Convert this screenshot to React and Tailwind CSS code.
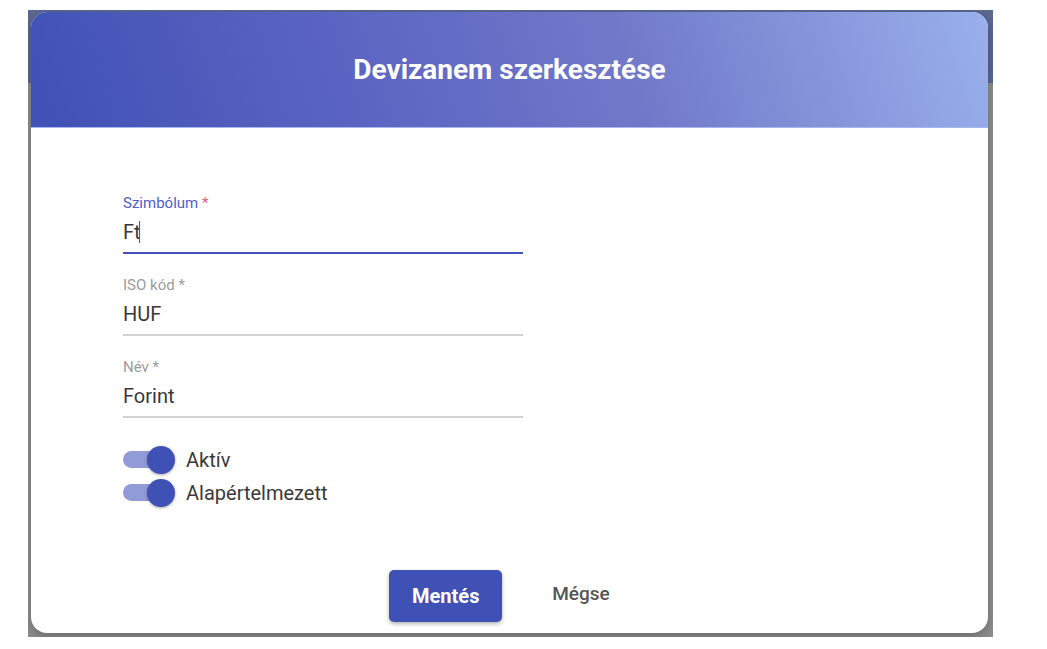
import React from 'react'

const font = { fontFamily: 'Roboto, "Noto Sans", sans-serif' }

function Field({ label, value, focused, caret }) {
  return (
    <div className="w-[400px]">
      <div className={`h-[18px] text-[15px] leading-[18px] ${focused ? 'text-[#4e5ec4]' : 'text-[#9b9b9b]'}`}>
        {label} <span className={focused ? 'text-[#ec5b85]' : ''}>*</span>
      </div>
      <div className="mt-[7px] h-[26px] text-[20px] leading-[26px] text-[#383838] flex items-center">
        {value}
        {caret && <span className="-ml-[2px] w-[1.5px] h-[22px] bg-[#3f51b5]" />}
      </div>
      <div className={`mt-[7px] h-[2px] ${focused ? 'bg-[#4354b8]' : 'bg-[#d2d2d2]'}`} />
    </div>
  )
}

function Toggle({ label }) {
  return (
    <div className="flex items-center h-[30px]">
      <div className="relative w-[52px] h-[30px]">
        <div className="absolute left-0 top-[6px] w-[44px] h-[17px] rounded-full bg-[#909bd8]" />
        <div className="absolute left-[24px] top-[1px] w-[28px] h-[28px] rounded-full bg-[#3f51b5] shadow-[0_1px_3px_rgba(0,0,0,0.35)]" />
      </div>
      <span className="ml-[11px] text-[20px] text-[#3a3a3a]">{label}</span>
    </div>
  )
}

export default function App() {
  return (
    <div className="w-[1047px] h-[649px] bg-white pt-[10px] pl-[28px]" style={font}>
      <div className="relative w-[965px] h-[627px] bg-[#8e8e8e] overflow-hidden">
        <div className="h-[73px] bg-[#5b6891]" />
        <div className="absolute left-[3px] top-[2px] w-[957px] h-[621px] bg-white rounded-[16px] overflow-hidden flex flex-col shadow-[0_4px_12px_rgba(0,0,0,0.25)]">
          <div className="h-[116px] shrink-0 flex items-center justify-center bg-[linear-gradient(72deg,#3f51b5_0%,#5a63c1_32%,#7079c9_62%,#9ab0ec_100%)] border-b border-[#a9b6ee]">
            <h1 className="text-[28px] font-bold text-white">Devizanem szerkesztése</h1>
          </div>
          <div className="flex flex-col pl-[92px] pt-[66px]">
            <Field label="Szimbólum" value="Ft" focused caret />
            <div className="mt-[22px]">
              <Field label="ISO kód" value="HUF" />
            </div>
            <div className="mt-[22px]">
              <Field label="Név" value="Forint" />
            </div>
            <div className="mt-[27px] flex flex-col gap-[3px]">
              <Toggle label="Aktív" />
              <Toggle label="Alapértelmezett" />
            </div>
          </div>
          <div className="mt-[62px] flex justify-center items-center gap-[34px] pr-[4px]">
            <button className="w-[113px] h-[52px] rounded-[5px] bg-[#3f51b5] text-white text-[20px] font-bold shadow-[0_2px_4px_rgba(0,0,0,0.3)]">
              Mentés
            </button>
            <button className="h-[52px] px-[16px] text-[19px] font-medium text-[#555] -translate-y-[2px]">
              Mégse
            </button>
          </div>
        </div>
      </div>
    </div>
  )
}
